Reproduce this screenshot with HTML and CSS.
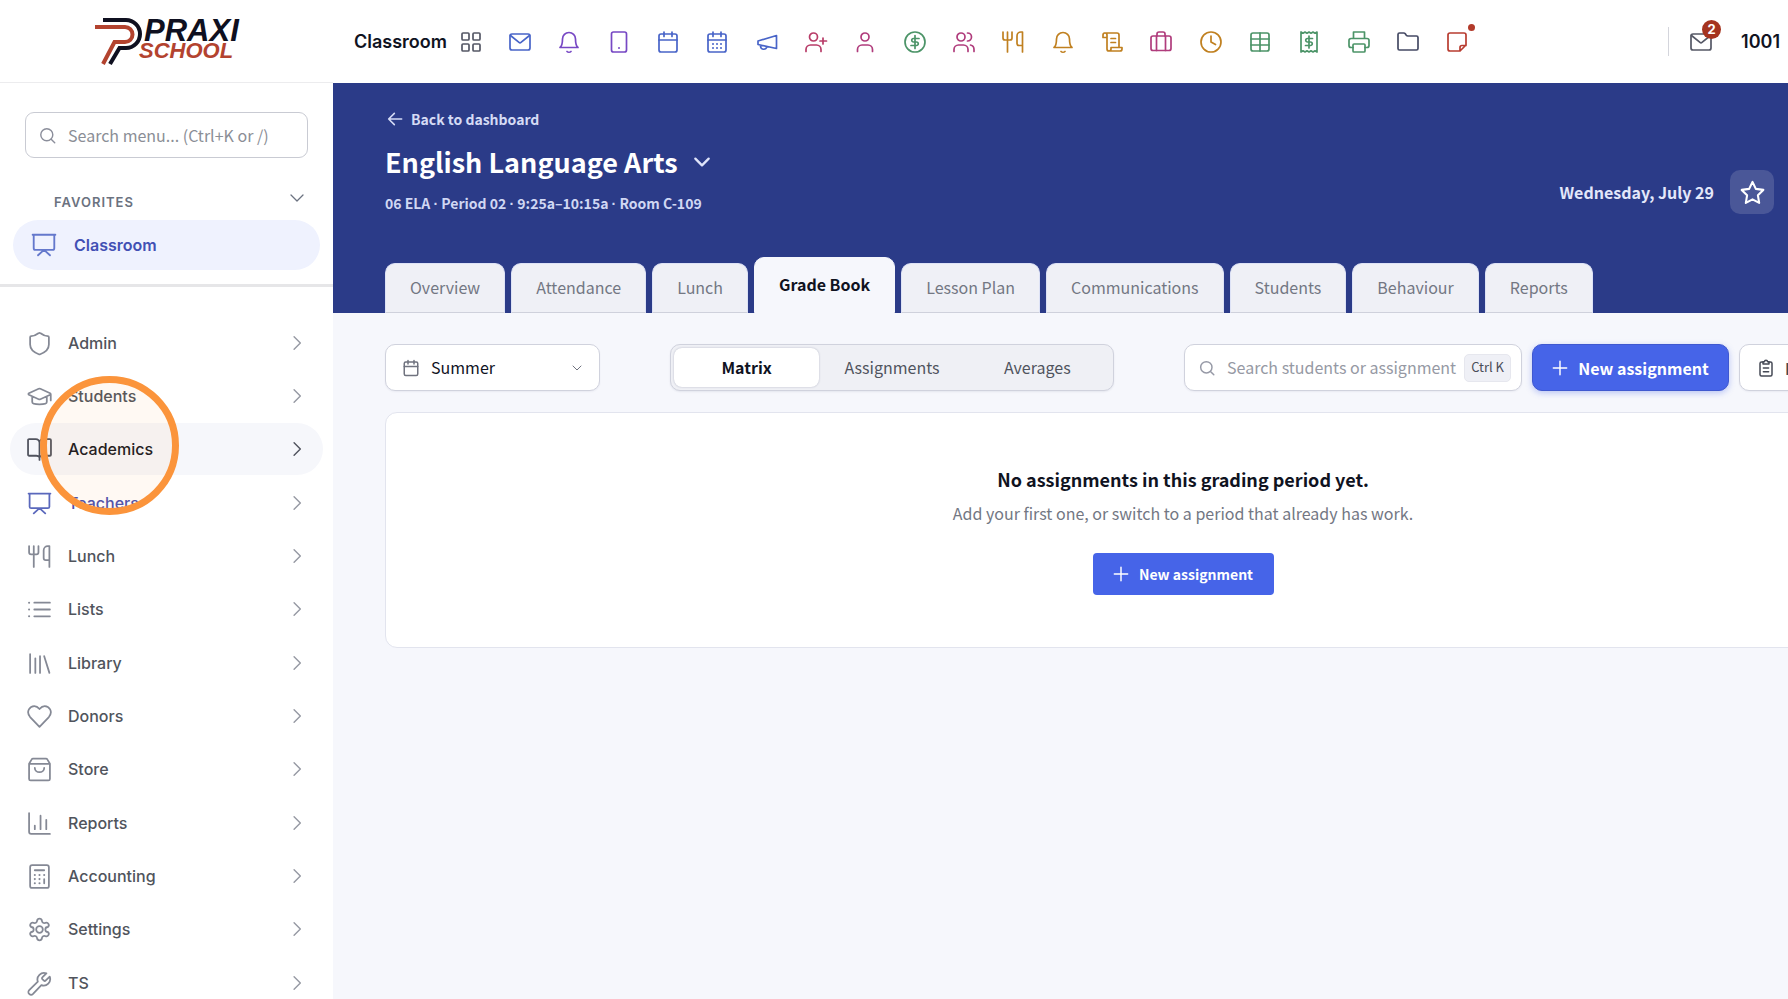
FILE: index.html
```html
<!DOCTYPE html>
<html lang="en">
<head>
<meta charset="utf-8">
<title>English Language Arts – Grade Book</title>
<link rel="stylesheet" href="styles.css">
</head>
<body>
<svg class="sprite" aria-hidden="true">
  <symbol id="grid" viewBox="0 0 24 24"><rect x="3" y="3" width="7" height="7" rx="1"/><rect x="14" y="3" width="7" height="7" rx="1"/><rect x="3" y="14" width="7" height="7" rx="1"/><rect x="14" y="14" width="7" height="7" rx="1"/></symbol>
  <symbol id="mail" viewBox="0 0 24 24"><rect x="2" y="4" width="20" height="16" rx="2"/><path d="M2.500 5.500 11 12.400a1.600 1.600 0 0 0 2 0l8.500-6.900"/></symbol>
  <symbol id="bell" viewBox="0 0 24 24"><path d="M3 17.500h18c-2-1.500-2.500-3.500-2.500-8.500a6.500 6.500 0 0 0-13 0c0 5-.5 7-2.500 8.500ZM10 21.500c1 1 3 1 4 0"/></symbol>
  <symbol id="phone" viewBox="0 0 24 24"><rect x="4.500" y="2" width="15" height="20" rx="2"/><path d="M12 18h.01" stroke-width="2"/></symbol>
  <symbol id="cal" viewBox="0 0 24 24"><rect x="3" y="4" width="18" height="18" rx="2"/><path d="M3 10h18M8 2v4.500M16 2v4.500"/></symbol>
  <symbol id="caldots" viewBox="0 0 24 24"><rect x="3" y="4" width="18" height="18" rx="2"/><path d="M3 10h18M8 2v4.500M16 2v4.500"/><path d="M8 14h.01M12 14h.01M16 14h.01M8 18h.01M12 18h.01M16 18h.01" stroke-width="2"/></symbol>
  <symbol id="horn" viewBox="0 0 24 24"><path d="M21.500 5.500v13L3 14.500v-3.500ZM5.500 15.200v1.300a3.200 3.200 0 0 0 6.300.2"/></symbol>
  <symbol id="userplus" viewBox="0 0 24 24"><circle cx="9.500" cy="7" r="4"/><path d="M2 21.500v-2a4.500 4.500 0 0 1 4.500-4.500h6a4.500 4.500 0 0 1 4.500 4.500v2M19 8v6M16 11h6.500"/></symbol>
  <symbol id="user" viewBox="0 0 24 24"><circle cx="12" cy="7" r="4"/><path d="M4.500 21.500v-2A4.500 4.500 0 0 1 9 15h6a4.500 4.500 0 0 1 4.500 4.500v2"/></symbol>
  <symbol id="dollar" viewBox="0 0 24 24"><circle cx="12" cy="12" r="10"/><path d="M12 5.500v13M16 8.500h-5.500a1.750 1.750 0 0 0 0 3.500h3a1.750 1.750 0 0 1 0 3.500H8"/></symbol>
  <symbol id="users" viewBox="0 0 24 24"><circle cx="9" cy="7" r="4"/><path d="M2 21.500v-2A4.500 4.500 0 0 1 6.500 15h5a4.500 4.500 0 0 1 4.500 4.500v2M15.500 3a4 4 0 0 1 0 8M18.500 15a4.500 4.500 0 0 1 3.500 4.500v2"/></symbol>
  <symbol id="fork" viewBox="0 0 24 24"><path d="M2 2v6a2 2 0 0 0 2 2h5a2 2 0 0 0 2-2V2M6.500 2v20M21.500 15.500V2h-1.500a4 4 0 0 0-4 4v7.500a2 2 0 0 0 2 2h3.500V22"/></symbol>
  <symbol id="scroll" viewBox="0 0 24 24"><path d="M19 16.500V5a2 2 0 0 0-2-2H4M11 8.500h4.500M11 12.500h4.500M8 21h12a2 2 0 0 0 2-2v-1.500H11V19a2 2 0 0 1-4 0V5a2 2 0 1 0-4 0v2.500h4"/></symbol>
  <symbol id="case" viewBox="0 0 24 24"><rect x="2" y="6" width="20" height="14.500" rx="2"/><path d="M7.500 20.500V6M16.500 20.500V6M8 6V4a2 2 0 0 1 2-2h4a2 2 0 0 1 2 2v2"/></symbol>
  <symbol id="clock" viewBox="0 0 24 24"><circle cx="12" cy="12" r="10"/><path d="M12 6v6l4.500 2.500"/></symbol>
  <symbol id="table" viewBox="0 0 24 24"><rect x="3" y="3" width="18" height="18" rx="2"/><path d="M12 3v18M3 9h18M3 15h18"/></symbol>
  <symbol id="receipt" viewBox="0 0 24 24"><path d="M4 2v20l2-1.200L8 22l2-1.200 2 1.200 2-1.200 2 1.200 2-1.200 2 1.200V2l-2 1.200L16 2l-2 1.200L12 2l-2 1.200L8 2 6 3.200ZM12 6v12M15.500 8.500h-5a1.750 1.750 0 0 0 0 3.500h3a1.750 1.750 0 0 1 0 3.500H8.500"/></symbol>
  <symbol id="printer" viewBox="0 0 24 24"><path d="M6.500 8.500V2h11v6.500M6 17.500H4a2 2 0 0 1-2-2v-5a2 2 0 0 1 2-2h16a2 2 0 0 1 2 2v5a2 2 0 0 1-2 2h-2"/><rect x="6" y="14" width="12" height="8" rx="1"/></symbol>
  <symbol id="folder" viewBox="0 0 24 24"><path d="M2 18.500v-14a1.500 1.500 0 0 1 1.500-1.500h4.200a2 2 0 0 1 1.600.8l1 1.400a2 2 0 0 0 1.600.8H20.500A1.500 1.500 0 0 1 22 7.500v11a1.500 1.500 0 0 1-1.500 1.500h-17A1.500 1.500 0 0 1 2 18.500Z"/></symbol>
  <symbol id="note" viewBox="0 0 24 24"><path d="M21 5v10l-6 6H5a2 2 0 0 1-2-2V5a2 2 0 0 1 2-2h14a2 2 0 0 1 2 2ZM15 21v-3.500a2 2 0 0 1 2-2h4"/></symbol>
  <symbol id="shield" viewBox="0 0 24 24"><path d="M21 13c0 5-3.500 7.500-8.300 9.300a2 2 0 0 1-1.400 0C6.500 20.500 3 18 3 13V6a1 1 0 0 1 1-1c2.300 0 5-1.300 7-2.800a1.500 1.500 0 0 1 2 0C15 3.700 17.700 5 20 5a1 1 0 0 1 1 1Z"/></symbol>
  <symbol id="cap" viewBox="0 0 24 24"><path d="M1.800 10.300a.8.800 0 0 1 0-1.400l9.400-4.300a2 2 0 0 1 1.600 0l9.400 4.300a.8.800 0 0 1 0 1.400l-9.400 4.300a2 2 0 0 1-1.600 0ZM22.800 9.800v6M5 12.500v4.800c0 3 14 3 14 0v-4.800"/></symbol>
  <symbol id="book" viewBox="0 0 24 24"><path d="M12 22v-2.500c-1-1.300-2-1.500-3-1.500H2a1 1 0 0 1-1-1V3a1 1 0 0 1 1-1h6.500A3.500 3.500 0 0 1 12 5.500 3.500 3.500 0 0 1 15.500 2H22a1 1 0 0 1 1 1v14a1 1 0 0 1-1 1h-7c-1 0-2 .2-3 1.500V5.500"/></symbol>
  <symbol id="board" viewBox="0 0 24 24"><path d="M1.500 2.500h21M2.500 2.500V15a1.500 1.500 0 0 0 1.500 1.500h16a1.500 1.500 0 0 0 1.500-1.500V2.500M6.500 21.500l5.500-5 5.500 5"/></symbol>
  <symbol id="list" viewBox="0 0 24 24"><path d="M7 5.500h15M7 12h15M7 18.500h15"/><path d="M2 5.500h.01M2 12h.01M2 18.500h.01" stroke-width="2"/></symbol>
  <symbol id="library" viewBox="0 0 24 24"><path d="M3 3v18M8 7v14M12.500 5v16M16.500 5l5 16"/></symbol>
  <symbol id="heart" viewBox="0 0 24 24"><path d="M12 22 3 12.500C-1.500 7 3 2 7 2c2.500 0 3.500 1 5 2.800C13.500 3 14.500 2 17 2c4 0 8.500 5 4 10.500Z"/></symbol>
  <symbol id="bag" viewBox="0 0 24 24"><path d="M2 6.500 4.500 2.300a1.500 1.500 0 0 1 1.300-.8h12.400a1.500 1.500 0 0 1 1.300.8L22 6.500V21a1.500 1.500 0 0 1-1.500 1.500h-17A1.500 1.500 0 0 1 2 21ZM2 6.500h20M7.500 10.500c0 5.500 9 5.500 9 0"/></symbol>
  <symbol id="chart" viewBox="0 0 24 24"><path d="M2 2v18a2 2 0 0 0 2 2h18M7.500 14v3.500M13 4.500v13M18.500 8.500v9"/></symbol>
  <symbol id="calc" viewBox="0 0 24 24"><rect x="3" y="1" width="18" height="22" rx="2"/><path d="M7.500 6h9M16.500 14.500v4"/><path d="M7.500 10.500h.01M12 10.500h.01M16.500 10.500h.01M7.500 14.500h.01M12 14.500h.01M7.500 18.500h.01M12 18.500h.01" stroke-width="2"/></symbol>
  <symbol id="gear" viewBox="0 0 24 24"><circle cx="12" cy="12" r="3.200"/><path d="M9.700 3.600a2.330 2.330 0 0 1 4.600 0 2.330 2.330 0 0 0 3.400 2 2.330 2.330 0 0 1 2.300 4 2.330 2.330 0 0 0 0 4.800 2.330 2.330 0 0 1-2.300 4 2.330 2.330 0 0 0-3.400 2 2.330 2.330 0 0 1-4.600 0 2.330 2.330 0 0 0-3.400-2 2.330 2.330 0 0 1-2.300-4 2.330 2.330 0 0 0 0-4.800 2.330 2.330 0 0 1 2.300-4 2.330 2.330 0 0 0 3.400-2Z"/></symbol>
  <symbol id="wrench" viewBox="0 0 24 24"><path d="M14.700 6.200a1 1 0 0 0 0 1.500l1.600 1.600a1 1 0 0 0 1.500 0l4-3.900a6.300 6.300 0 0 1-8 8.200l-8 8.400a2.600 2.600 0 0 1-3.700-3.700l8.300-8a6.300 6.300 0 0 1 8.200-8Z"/></symbol>
  <symbol id="search" viewBox="0 0 24 24"><circle cx="11" cy="11" r="8.500"/><path d="m17.200 17.200 5 5"/></symbol>
  <symbol id="right" viewBox="0 0 24 24"><path d="m8.500 4.500 7.500 7.500-7.500 7.500"/></symbol>
  <symbol id="down" viewBox="0 0 24 24"><path d="m4 8 8 8 8-8"/></symbol>
  <symbol id="back" viewBox="0 0 24 24"><path d="M22 12H2.500M11 3.500 2.500 12l8.500 8.500"/></symbol>
  <symbol id="plus" viewBox="0 0 24 24"><path d="M12 2v20M2 12h20"/></symbol>
  <symbol id="star" viewBox="0 0 24 24"><path d="m12 1.800 3.200 6.700 7.200 1-5.200 5.200 1.200 7.300L12 18.600 5.600 22l1.200-7.300L1.600 9.500l7.200-1Z"/></symbol>
  <symbol id="clip" viewBox="0 0 24 24"><path d="M8 4H6a2 2 0 0 0-2 2v14.500a2 2 0 0 0 2 2h12a2 2 0 0 0 2-2V6a2 2 0 0 0-2-2h-2"/><path d="M8 6.500V3.500h2a2 2 0 0 1 4 0h2v3ZM8.500 12h7M8.500 17h7"/></symbol>
</svg>

<header class="topbar">
  <a class="logo" href="#" aria-label="Praxi School">
    <svg width="150" height="52" viewBox="0 0 150 52">
      <path class="logo-dark" d="M10 6H33a14 14 0 0 1 0 28H26.500L17 50"/>
      <path class="logo-red" d="M2 13H32a7.500 7.500 0 0 1 0 15H21.500L10 50"/>
      <text class="logo-dark-text" x="51" y="27">PRAXI</text>
      <text class="logo-red-text" x="46" y="44">SCHOOL</text>
    </svg>
  </a>
  <strong class="page-name">Classroom</strong>
  <nav class="shortcuts" aria-label="Shortcuts">
    <button class="slate" aria-label="Dashboard"><svg><use href="#grid"/></svg></button>
    <button class="blue" aria-label="Mail"><svg><use href="#mail"/></svg></button>
    <button class="violet" aria-label="Alerts"><svg><use href="#bell"/></svg></button>
    <button class="violet" aria-label="Mobile"><svg><use href="#phone"/></svg></button>
    <button class="blue" aria-label="Calendar"><svg><use href="#cal"/></svg></button>
    <button class="blue" aria-label="Schedule"><svg><use href="#caldots"/></svg></button>
    <button class="blue" aria-label="Announcements"><svg><use href="#horn"/></svg></button>
    <button class="rose" aria-label="Add person"><svg><use href="#userplus"/></svg></button>
    <button class="pink" aria-label="Person"><svg><use href="#user"/></svg></button>
    <button class="green" aria-label="Payments"><svg><use href="#dollar"/></svg></button>
    <button class="pink" aria-label="Families"><svg><use href="#users"/></svg></button>
    <button class="amber" aria-label="Lunch"><svg><use href="#fork"/></svg></button>
    <button class="amber" aria-label="Reminders"><svg><use href="#bell"/></svg></button>
    <button class="amber" aria-label="Records"><svg><use href="#scroll"/></svg></button>
    <button class="pink" aria-label="Staff"><svg><use href="#case"/></svg></button>
    <button class="amber" aria-label="Time"><svg><use href="#clock"/></svg></button>
    <button class="green" aria-label="Tables"><svg><use href="#table"/></svg></button>
    <button class="green" aria-label="Receipts"><svg><use href="#receipt"/></svg></button>
    <button class="green" aria-label="Print"><svg><use href="#printer"/></svg></button>
    <button class="navy" aria-label="Files"><svg><use href="#folder"/></svg></button>
    <button class="red" aria-label="Notes"><svg><use href="#note"/></svg><span class="dot"></span></button>
  </nav>
  <div class="account">
    <button class="slate" aria-label="Inbox"><svg><use href="#mail"/></svg><span class="count">2</span></button>
    <strong>1001</strong>
  </div>
</header>

<div class="shell">
  <aside class="sidebar">
    <label class="menu-search">
      <svg><use href="#search"/></svg>
      <input type="text" placeholder="Search menu... (Ctrl+K or /)" aria-label="Search menu">
    </label>
    <section class="favorites">
      <button class="fav-head"><span>FAVORITES</span><svg><use href="#down"/></svg></button>
      <a class="fav" href="#"><svg><use href="#board"/></svg>Classroom</a>
    </section>
    <ul class="menu">
      <li><a href="#"><svg><use href="#shield"/></svg><span>Admin</span><svg class="go"><use href="#right"/></svg></a></li>
      <li><a href="#"><svg><use href="#cap"/></svg><span>Students</span><svg class="go"><use href="#right"/></svg></a></li>
      <li class="hover"><a href="#"><svg><use href="#book"/></svg><span>Academics</span><svg class="go"><use href="#right"/></svg></a><i class="pointer"></i></li>
      <li class="current"><a href="#"><svg><use href="#board"/></svg><span>Teachers</span><svg class="go"><use href="#right"/></svg></a></li>
      <li><a href="#"><svg><use href="#fork"/></svg><span>Lunch</span><svg class="go"><use href="#right"/></svg></a></li>
      <li><a href="#"><svg><use href="#list"/></svg><span>Lists</span><svg class="go"><use href="#right"/></svg></a></li>
      <li><a href="#"><svg><use href="#library"/></svg><span>Library</span><svg class="go"><use href="#right"/></svg></a></li>
      <li><a href="#"><svg><use href="#heart"/></svg><span>Donors</span><svg class="go"><use href="#right"/></svg></a></li>
      <li><a href="#"><svg><use href="#bag"/></svg><span>Store</span><svg class="go"><use href="#right"/></svg></a></li>
      <li><a href="#"><svg><use href="#chart"/></svg><span>Reports</span><svg class="go"><use href="#right"/></svg></a></li>
      <li><a href="#"><svg><use href="#calc"/></svg><span>Accounting</span><svg class="go"><use href="#right"/></svg></a></li>
      <li><a href="#"><svg><use href="#gear"/></svg><span>Settings</span><svg class="go"><use href="#right"/></svg></a></li>
      <li><a href="#"><svg><use href="#wrench"/></svg><span>TS</span><svg class="go"><use href="#right"/></svg></a></li>
    </ul>
  </aside>

  <main class="main">
    <section class="hero">
      <div class="hero-row">
        <div class="course">
          <a class="back" href="#"><svg><use href="#back"/></svg>Back to dashboard</a>
          <h1>English Language Arts <button aria-label="Switch class"><svg><use href="#down"/></svg></button></h1>
          <p>06 ELA <b>·</b> Period 02 <b>·</b> 9:25a–10:15a <b>·</b> Room C-109</p>
        </div>
        <div class="today">
          <span>Wednesday, July 29</span>
          <button aria-label="Add to favorites"><svg><use href="#star"/></svg></button>
        </div>
      </div>
      <nav class="tabs" aria-label="Class sections">
        <a href="#">Overview</a>
        <a href="#">Attendance</a>
        <a href="#">Lunch</a>
        <a class="active" href="#">Grade Book</a>
        <a href="#">Lesson Plan</a>
        <a href="#">Communications</a>
        <a href="#">Students</a>
        <a href="#">Behaviour</a>
        <a href="#">Reports</a>
      </nav>
    </section>

    <div class="content">
      <div class="toolbar">
        <label class="period">
          <svg><use href="#cal"/></svg>
          <select aria-label="Grading period"><option>Summer</option></select>
          <svg class="caret"><use href="#down"/></svg>
        </label>
        <div class="segments">
          <button class="on">Matrix</button>
          <button>Assignments</button>
          <button>Averages</button>
        </div>
        <div class="actions">
          <label class="find">
            <svg><use href="#search"/></svg>
            <input type="text" placeholder="Search students or assignment" aria-label="Search students or assignment">
            <kbd>Ctrl K</kbd>
          </label>
          <button class="primary"><svg><use href="#plus"/></svg>New assignment</button>
          <button class="plain"><svg><use href="#clip"/></svg>Reports</button>
        </div>
      </div>
      <section class="empty">
        <h2>No assignments in this grading period yet.</h2>
        <p>Add your first one, or switch to a period that already has work.</p>
        <button class="primary small"><svg><use href="#plus"/></svg>New assignment</button>
      </section>
    </div>
  </main>
</div>
</body>
</html>
```
FILE: styles.css
```css
* { box-sizing: border-box; }

body {
  margin: 0;
  height: 100vh;
  display: flex;
  flex-direction: column;
  overflow: hidden;
  background: #fff;
  color: #10131f;
  font: 16px/24px "Noto Sans CJK SC", "Noto Sans", sans-serif;
}

button, input, select { font: inherit; color: inherit; }
button { padding: 0; border: 0; background: none; cursor: pointer; }
a { color: inherit; text-decoration: none; }
h1, h2, p, ul { margin: 0; padding: 0; }

svg {
  flex: none;
  fill: none;
  stroke: currentColor;
  stroke-width: 1.7;
  stroke-linecap: round;
  stroke-linejoin: round;
}
.sprite { position: absolute; width: 0; height: 0; }

/* Top bar */
.topbar {
  flex: none;
  display: flex;
  align-items: center;
  height: 83px;
  font-family: Inter, sans-serif;
}
.logo {
  display: flex;
  width: 333px;
  height: 83px;
  padding: 14px 0 0 93px;
  border-bottom: 1px solid #ececee;
}
.logo path { stroke-width: 4; stroke-linecap: butt; stroke-linejoin: miter; }
.logo-dark { stroke: #0f1020; }
.logo-red { stroke: #b3432f; }
.logo text { stroke: none; font-family: "Liberation Sans", Arial, sans-serif; font-style: italic; font-weight: 700; }
.logo-dark-text { fill: #0f1020; font-size: 31px; }
.logo-red-text { fill: #b3432f; font-size: 22px; }
.page-name { padding-left: 21px; width: 126px; font-size: 18px; font-weight: 600; }

.shortcuts { display: flex; gap: 25px; }
.shortcuts button, .account button { position: relative; width: 24px; height: 24px; }
.shortcuts button:nth-child(3n) { margin-right: 1px; }
.shortcuts svg, .account svg { display: block; width: 24px; height: 24px; }
.slate { color: #555866; }
.blue { color: #4864c8; }
.violet { color: #7748c4; }
.rose { color: #b83c68; }
.pink { color: #b03c7c; }
.green { color: #4c9468; }
.amber { color: #c08020; }
.navy { color: #454a64; }
.red { color: #b83c30; }
.dot {
  position: absolute;
  top: -6px;
  right: -6px;
  width: 7px;
  height: 7px;
  border-radius: 50%;
  background: #b23a2a;
}
.account {
  display: flex;
  align-items: center;
  gap: 28px;
  height: 29px;
  margin-left: auto;
  padding: 0 8px 0 20px;
  border-left: 1px solid #d4d5dc;
  font-size: 18px;
}
.account strong { font-weight: 600; }
.count {
  position: absolute;
  top: -10px;
  right: -8px;
  width: 19px;
  height: 19px;
  border-radius: 50%;
  background: #a5341f;
  color: #fff;
  font-size: 13px;
  font-weight: 700;
  line-height: 19px;
}

/* Sidebar */
.shell { flex: 1; display: flex; min-height: 0; }
.sidebar {
  flex: none;
  width: 333px;
  padding-top: 29px;
  font-family: Inter, sans-serif;
}
.menu-search {
  display: flex;
  align-items: center;
  gap: 12px;
  height: 46px;
  margin: 0 25px;
  padding: 0 13px;
  border: 1px solid #c9cbd3;
  border-radius: 9px;
  color: #8b8e9b;
  font-family: "Noto Sans CJK SC", sans-serif;
}
.menu-search svg { width: 17px; height: 17px; stroke-width: 2; }
input { flex: 1; min-width: 0; padding: 0; border: 0; outline: 0; background: none; }
input::placeholder { color: #8b8e96; opacity: 1; }
.favorites { padding: 27px 13px 14px; border-bottom: 3px solid #e6e6e8; }
.fav-head {
  display: flex;
  justify-content: space-between;
  width: 100%;
  height: 35px;
  padding: 4px 14px 0 41px;
  color: #6b7280;
  font-size: 13px;
  font-weight: 600;
  letter-spacing: 1px;
}
.fav-head span { line-height: 26px; }
.fav-head svg { width: 18px; height: 18px; }
.fav {
  display: flex;
  align-items: center;
  gap: 17px;
  height: 50px;
  padding-left: 18px;
  border-radius: 25px;
  background: #eff2fe;
  color: #4250b4;
  font-weight: 600;
}
.fav svg { width: 26px; height: 26px; color: #6478cc; }

.menu { list-style: none; padding: 30px 10px 0; }
.menu li { position: relative; margin-bottom: 1px; }
.menu li:nth-child(3n) { margin-bottom: 2px; }
.menu a {
  display: flex;
  align-items: center;
  gap: 16px;
  height: 52px;
  padding: 0 16px 0 17px;
  border-radius: 26px;
  color: #50545c;
  font-weight: 500;
}
.menu span { flex: 1; }
.menu svg { width: 25px; height: 25px; color: #858995; }
.menu svg.go { width: 20px; height: 20px; color: #9699a3; }
.menu .hover a { background: #f6f7fb; color: #16181f; }
.menu .hover a svg { color: #50535e; }
.menu .current a { color: #4a50b0; }
.menu .current a svg:first-child { color: #5a68bc; }
.pointer {
  position: absolute;
  z-index: 1;
  top: -47px;
  left: 30px;
  width: 139px;
  height: 139px;
  border: 7px solid #fb943b;
  border-radius: 50%;
  background: rgba(251, 148, 59, 0.06);
  pointer-events: none;
}

/* Class header */
.main { flex: 1; min-width: 0; overflow: hidden; background: #f6f7fc; }
.hero { padding: 24px 14px 0 52px; background: #2b3b88; color: #fff; }
.hero-row { display: flex; justify-content: space-between; align-items: flex-end; }
.back {
  display: flex;
  align-items: center;
  gap: 8px;
  padding-left: 2px;
  font-size: 14px;
  font-weight: 700;
  color: #d5dbf5;
}
.back svg { width: 16px; height: 16px; stroke-width: 2.4; }
.course h1 { display: flex; align-items: center; gap: 14px; margin-top: 13px; font-size: 27px; line-height: 36px; }
.course h1 svg { display: block; width: 20px; height: 20px; stroke-width: 2.8; color: #dfe4fa; }
.course p { margin-top: 13px; font-size: 14px; font-weight: 700; line-height: 20px; color: #d0d7f3; }
.course b { font-family: "Liberation Sans", Arial, sans-serif; }
.today { display: flex; align-items: center; gap: 16px; color: #e3e7fa; font-weight: 700; }
.today button {
  display: grid;
  place-items: center;
  width: 44px;
  height: 44px;
  border-radius: 10px;
  background: #4a5798;
  color: #fff;
}
.today svg { width: 25px; height: 25px; stroke-width: 2; }

.tabs { display: flex; align-items: flex-end; gap: 6px; margin-top: 43px; }
.tabs a {
  height: 50px;
  padding: 0 24px;
  border: 1px solid #dde2f6;
  border-bottom-color: #cfd1dc;
  border-radius: 10px 10px 0 0;
  background: #eff0f6;
  color: #737783;
  line-height: 46px;
}
.tabs .active {
  height: 56px;
  border-color: #f6f7fc;
  background: #f6f7fc;
  color: #10131f;
  font-weight: 700;
  line-height: 52px;
}

/* Gradebook: runs wider than the viewport and is clipped on the right */
.content { margin-right: -193px; padding: 31px 0 0 52px; }
.toolbar { display: flex; gap: 70px; }
.period, .segments, .find, .actions > button {
  height: 47px;
  border: 1px solid #d0d2dd;
  border-radius: 10px;
}
.period, .find, .plain { background: #fff; box-shadow: 0 1px 2px rgba(30, 35, 80, 0.06); }
.period { display: flex; align-items: center; gap: 11px; width: 215px; padding: 0 16px; }
.period svg { width: 18px; height: 18px; stroke-width: 2; color: #70737f; }
.period .caret { width: 12px; height: 12px; }
.period select { flex: 1; min-width: 0; appearance: none; border: 0; padding: 0 0 2px; background: none; outline: 0; }
.segments {
  display: grid;
  grid-template-columns: repeat(3, 1fr);
  width: 444px;
  padding: 3px;
  background: #eff0f5;
  color: #50545e;
  box-shadow: 0 1px 2px rgba(30, 35, 80, 0.08);
}
.segments button { padding-bottom: 2px; }
.segments .on {
  border-radius: 8px;
  background: #fff;
  color: #10131f;
  font-weight: 700;
  box-shadow: 0 0 2px rgba(30, 35, 80, 0.3);
}
.actions { display: flex; gap: 10px; }
.find { display: flex; align-items: center; gap: 12px; width: 338px; padding: 0 10px 0 14px; }
.find svg { width: 16px; height: 16px; stroke-width: 2.2; color: #9699a6; }
.find input { padding-bottom: 2px; }
.find input::placeholder { color: #9699a4; }
.find kbd {
  height: 28px;
  margin-left: -8px;
  padding: 0 6px;
  border: 1px solid #e6e7ee;
  border-radius: 5px;
  background: #eff0f6;
  color: #4a4d58;
  font: 13px/24px "Noto Sans CJK SC", sans-serif;
}
.primary, .plain { display: flex; align-items: center; justify-content: center; gap: 10px; font-weight: 700; white-space: nowrap; }
.primary { width: 197px; background: #4664e8; color: #fff; }
.actions > .primary { border-color: #3f58d0; box-shadow: 0 2px 6px rgba(70, 100, 232, 0.35); }
.primary svg { width: 16px; height: 16px; stroke-width: 2.2; }
.plain { padding: 0 17px; color: #454955; }
.plain svg { width: 18px; height: 18px; stroke-width: 2; }

.empty {
  display: flex;
  flex-direction: column;
  align-items: center;
  margin-top: 21px;
  padding: 53px 0 52px;
  border: 1px solid #e2e4ee;
  border-radius: 12px;
  background: #fff;
}
.empty h2 { font-size: 18px; line-height: 26px; }
.empty p { margin-top: 9px; color: #737783; }
.small { width: 181px; height: 42px; margin-top: 28px; border-radius: 4px; font-size: 14px; }
```
